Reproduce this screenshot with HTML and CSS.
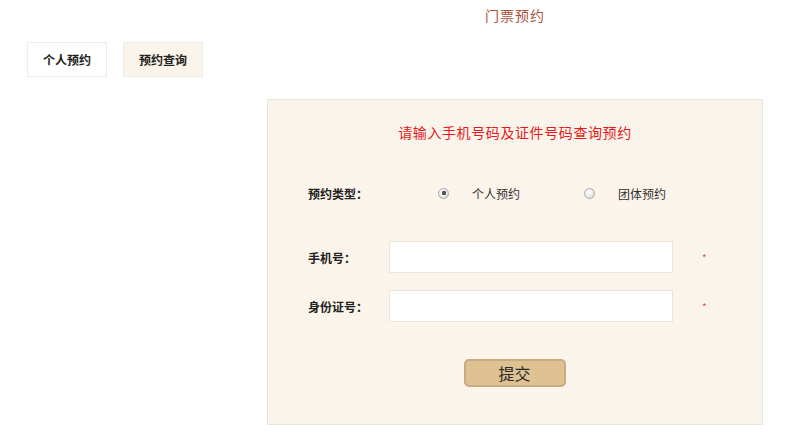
FILE: index.html
```html
<!DOCTYPE html>
<html lang="zh-CN">
<head>
<meta charset="utf-8">
<title>门票预约</title>
<link rel="stylesheet" href="styles.css">
</head>
<body>
<header class="page-head">
  <h1 class="page-title">门票预约</h1>
</header>
<nav class="tabs">
  <a class="tab">个人预约</a>
  <a class="tab tab-active">预约查询</a>
</nav>
<section class="panel">
  <h2 class="panel-title">请输入手机号码及证件号码查询预约</h2>
  <div class="row row-type">
    <span class="label label-type">预约类型：</span>
    <label class="choice"><input type="radio" name="t" class="radio" checked><span class="choice-text">个人预约</span></label>
    <label class="choice choice-2"><input type="radio" name="t" class="radio"><span class="choice-text">团体预约</span></label>
  </div>
  <div class="row row-phone">
    <span class="label">手机号：</span>
    <input class="field" type="text">
    <span class="req">*</span>
  </div>
  <div class="row row-id">
    <span class="label">身份证号：</span>
    <input class="field" type="text">
    <span class="req">*</span>
  </div>
  <div class="actions">
    <button class="submit" type="button">提交</button>
  </div>
</section>
</body>
</html>
```
FILE: styles.css
```css
body {
  margin: 0;
  background: #fff;
  font-family: "Noto Sans CJK SC", "Noto Sans", sans-serif;
  color: #333;
}
.page-head {
  margin-left: 267px;
  width: 496px;
  padding-top: 5px;
  height: 37px;
  box-sizing: border-box;
}
.page-title {
  margin: 0;
  text-align: center;
  font-size: 14px;
  line-height: 20px;
  font-weight: normal;
  color: #a9543b;
  letter-spacing: 1px;
}
.tabs {
  display: flex;
  gap: 16px;
  padding-left: 27px;
  margin-top: 5px;
}
.tab {
  width: 80px;
  height: 35px;
  box-sizing: border-box;
  border: 1px solid #efebe6;
  background: #fff;
  font-size: 12px;
  font-weight: bold;
  color: #222;
  display: flex;
  align-items: center;
  justify-content: center;
}
.tab-active {
  background: #fbf4ea;
}
.panel {
  margin: 22px 0 0 267px;
  width: 496px;
  height: 326px;
  box-sizing: border-box;
  border: 1px solid #ebe4da;
  background: #fbf4ea;
  padding: 22px 0 0 40px;
}
.panel-title {
  margin: 0 0 0 -40px;
  text-align: center;
  font-size: 14px;
  line-height: 20px;
  font-weight: normal;
  color: #e8171b;
  letter-spacing: 0.6px;
}
.row {
  display: flex;
  align-items: center;
  font-size: 12px;
}
.row-type {
  margin-top: 41px;
  height: 20px;
}
.label {
  width: 81px;
  color: #222;
  font-weight: bold;
}
.label-type {
  width: 130px;
}
.choice {
  display: flex;
  align-items: center;
  color: #333;
}
.choice-2 {
  margin-left: 64px;
}
.radio {
  appearance: none;
  -webkit-appearance: none;
  margin: 0;
  width: 11px;
  height: 11px;
  border-radius: 50%;
  border: 1px solid #aaa;
  background: radial-gradient(circle at 40% 35%, #fff 0%, #e6e6e6 60%, #cfcfcf 100%);
  box-sizing: border-box;
  position: relative;
}
.radio:checked::after {
  content: "";
  position: absolute;
  left: 2.5px;
  top: 2.5px;
  width: 4px;
  height: 4px;
  background: #555;
  border-radius: 1px;
}
.choice-text {
  margin-left: 23px;
}
.row-phone {
  margin-top: 38px;
}
.row-id {
  margin-top: 17px;
}
.field {
  width: 284px;
  height: 32px;
  box-sizing: border-box;
  border: 1px solid #ebe5dd;
  background: #fff;
  margin: 0;
  padding: 0 6px;
}
.req {
  margin-left: 29px;
  color: #d9534f;
  font-size: 10px;
}
.actions {
  margin: 37px 0 0 -40px;
  display: flex;
  justify-content: center;
  padding-right: 1px;
}
.submit {
  width: 102px;
  height: 28px;
  border: 2px solid #c9ab82;
  border-radius: 5px;
  background: #dfc292;
  font-family: "Noto Sans CJK SC", sans-serif;
  font-size: 16px;
  color: #2a2a2a;
  padding: 0;
  line-height: 22px;
}
```
